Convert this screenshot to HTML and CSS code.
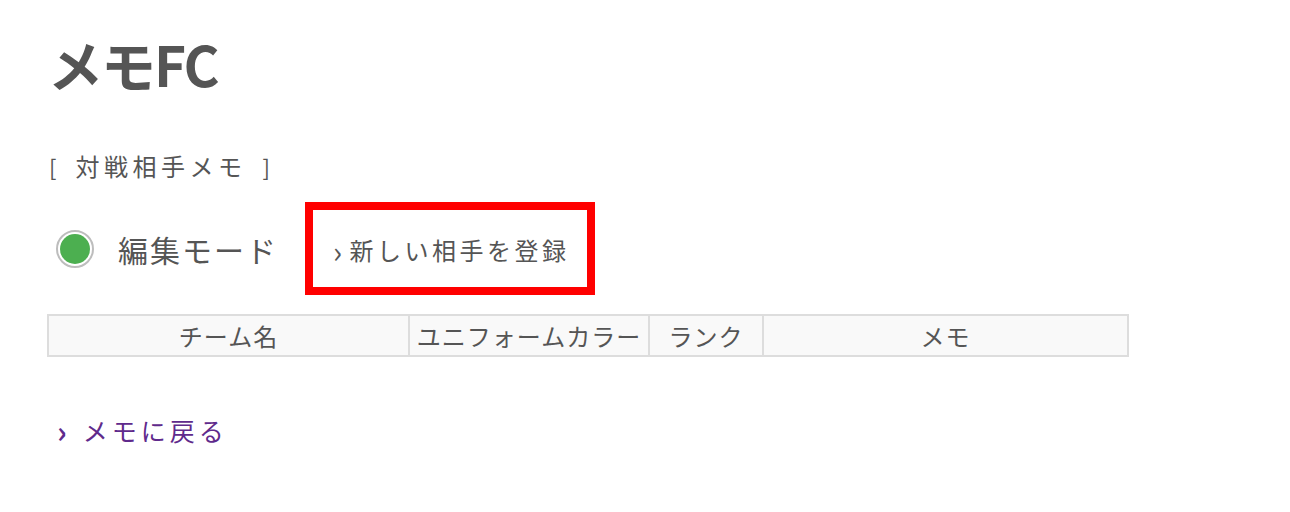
FILE: index.html
```html
<!DOCTYPE html>
<html lang="ja">
<head>
<meta charset="utf-8">
<title>メモFC</title>
<link rel="stylesheet" href="styles.css">
</head>
<body>
<div class="page">
  <h1 class="title">メモFC</h1>
  <p class="section"><span class="br">[</span><span class="section-text">対戦相手メモ</span><span class="br">]</span></p>
  <div class="mode-row">
    <label class="radio">
      <span class="radio-ring"><span class="radio-dot"></span></span>
      <span class="mode-label">編集モード</span>
    </label>
    <a class="add-link" href="#"><span class="chev">›</span>新しい相手を登録</a>
  </div>
  <table class="memo-table">
    <colgroup>
      <col class="c-name">
      <col class="c-color">
      <col class="c-rank">
      <col class="c-memo">
    </colgroup>
    <thead>
      <tr>
        <th>チーム名</th>
        <th>ユニフォームカラー</th>
        <th>ランク</th>
        <th>メモ</th>
      </tr>
    </thead>
  </table>
  <a class="back-link" href="#"><span class="chev">›</span>メモに戻る</a>
</div>
</body>
</html>
```

FILE: styles.css
```css
html, body {
  margin: 0;
  padding: 0;
  background: #ffffff;
}

body {
  font-family: "Noto Sans CJK JP", "Noto Sans", sans-serif;
  color: #555555;
}

.page {
  padding: 0 0 0 47px;
}

.title {
  margin: 35px 0 0 1px;
  font-size: 55px;
  line-height: 56px;
  font-weight: 700;
  letter-spacing: -2px;
  color: #555555;
}

.section {
  display: flex;
  align-items: center;
  margin: 61px 0 0 2px;
  font-size: 24px;
  line-height: 28px;
  color: #555555;
}

.section .br {
  font-size: 22px;
}

.section-text {
  margin: 0 16px 0 19px;
  letter-spacing: 4.5px;
}

.mode-row {
  display: flex;
  align-items: center;
  margin-top: 22px;
}

.radio {
  display: flex;
  align-items: center;
  margin-left: 9px;
}

.radio-ring {
  box-sizing: border-box;
  width: 38px;
  height: 38px;
  border-radius: 50%;
  border: 2px solid #bdbdbd;
  display: flex;
  align-items: center;
  justify-content: center;
}

.radio-dot {
  width: 30px;
  height: 30px;
  border-radius: 50%;
  background: #4caf50;
}

.mode-label {
  margin-left: 24px;
  font-size: 30px;
  line-height: 36px;
  letter-spacing: 2px;
}

.add-link {
  display: flex;
  align-items: center;
  box-sizing: border-box;
  width: 290px;
  height: 93px;
  margin-left: 27px;
  padding: 2px 0 0 20px;
  border: 8px solid #ff0000;
  color: #555555;
  text-decoration: none;
  font-size: 24px;
  line-height: 30px;
  letter-spacing: 3.5px;
}

.chev {
  font-size: 30px;
  line-height: 30px;
  margin-right: 2px;
}

.add-link .chev {
  font-weight: 400;
  margin-right: 4px;
}

.memo-table {
  margin-top: 19px;
  width: 1080px;
  table-layout: fixed;
  border-collapse: collapse;
}

.c-name { width: 361px; }
.c-color { width: 240px; }
.c-rank { width: 114px; }
.c-memo { width: 365px; }

.memo-table th {
  height: 39px;
  padding: 0;
  border: 2px solid #dddddd;
  background: #f9f9f9;
  font-weight: 400;
  font-size: 24px;
  line-height: 38px;
  color: #555555;
  letter-spacing: 1px;
  white-space: nowrap;
  overflow: hidden;
}

.back-link {
  display: inline-flex;
  align-items: center;
  margin: 58px 0 0 10px;
  color: #5f2a8c;
  text-decoration: none;
  font-size: 25px;
  line-height: 30px;
  letter-spacing: 4px;
}

.back-link .chev {
  font-weight: 700;
  margin-right: 12px;
}
```
